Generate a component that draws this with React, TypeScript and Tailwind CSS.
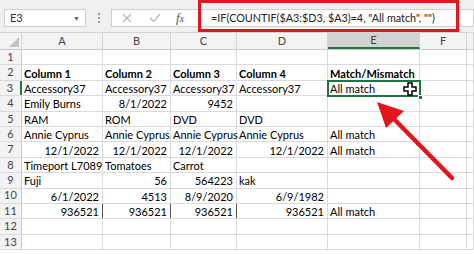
import React from "react";

type Cell = { t?: string; r?: boolean; b?: boolean };

const cols = ["A", "B", "C", "D", "E", "F", ""];
const widths = ["w-[81px]", "w-[68px]", "w-[66px]", "w-[91px]", "w-[92px]", "w-[47px]", "flex-1"];

const rows: Cell[][] = [
  [],
  [{ t: "Column 1", b: true }, { t: "Column 2", b: true }, { t: "Column 3", b: true }, { t: "Column 4", b: true }, { t: "Match/Mismatch", b: true }],
  [{ t: "Accessory37" }, { t: "Accessory37" }, { t: "Accessory37" }, { t: "Accessory37" }, { t: "All match" }],
  [{ t: "Emily Burns" }, { t: "8/1/2022", r: true }, { t: "9452", r: true }, {}, {}],
  [{ t: "RAM" }, { t: "ROM" }, { t: "DVD" }, { t: "DVD" }, {}],
  [{ t: "Annie Cyprus" }, { t: "Annie Cyprus" }, { t: "Annie Cyprus" }, { t: "Annie Cyprus" }, { t: "All match" }],
  [{ t: "12/1/2022", r: true }, { t: "12/1/2022", r: true }, { t: "12/1/2022", r: true }, { t: "12/1/2022", r: true }, { t: "All match" }],
  [{ t: "Timeport L7089" }, { t: "Tomatoes" }, { t: "Carrot" }, {}, {}],
  [{ t: "Fuji" }, { t: "56", r: true }, { t: "564223", r: true }, { t: "kak" }, {}],
  [{ t: "6/1/2022", r: true }, { t: "4513", r: true }, { t: "8/9/2020", r: true }, { t: "6/9/1982", r: true }, {}],
  [{ t: "936521", r: true }, { t: "936521", r: true }, { t: "936521", r: true }, { t: "936521", r: true }, { t: "All match" }],
  [],
  [],
];

export default function App() {
  return (
    <div className="relative w-[474px] h-[254px] overflow-hidden bg-white text-black" style={{ fontFamily: "Lato, 'Open Sans', sans-serif" }}>
      {/* Formula bar strip */}
      <div className="h-[33px] bg-[#f0f0f0] border-b border-[#d4d4d4] flex items-start pt-[9px]">
        <div className="ml-[4px] w-[82px] h-[18px] bg-white border border-[#d0d0d0] flex items-center justify-between px-[5px]">
          <span className="text-[11px] text-[#333]">E3</span>
          <span className="text-[7px] text-[#666]">▼</span>
        </div>
        <div className="w-[25px] h-[18px] flex flex-col items-center justify-center gap-[2px]">
          <span className="w-[2px] h-[2px] bg-[#9a9a9a]" />
          <span className="w-[2px] h-[2px] bg-[#9a9a9a]" />
          <span className="w-[2px] h-[2px] bg-[#9a9a9a]" />
        </div>
        <div className="flex-1 h-[18px] bg-white border border-[#d0d0d0] flex items-center">
          <svg width="12" height="12" viewBox="0 0 12 12" className="ml-[9px]">
            <path d="M2 2 L10 10 M10 2 L2 10" stroke="#b8b8b8" strokeWidth="1.2" />
          </svg>
          <svg width="14" height="12" viewBox="0 0 14 12" className="ml-[15px]">
            <path d="M2 6 L5.5 9.5 L12 2" stroke="#b8b8b8" strokeWidth="1.2" fill="none" />
          </svg>
          <span className="ml-[14px] text-[13px] italic text-[#555]" style={{ fontFamily: "'Liberation Serif', serif" }}>
            f<span className="text-[10px]">x</span>
          </span>
          <span className="ml-[27px] text-[10.8px] text-[#222] whitespace-nowrap">=IF(COUNTIF($A3:$D3, $A3)=4, "All match", "")</span>
        </div>
      </div>

      {/* Column headers */}
      <div className="flex h-[17px] bg-[#f3f3f3] border-b border-[#c8c8c8]">
        <div className="w-[22px] border-r border-[#d4d4d4] relative">
          <svg width="10" height="10" viewBox="0 0 10 10" className="absolute right-[2px] bottom-[2px]">
            <path d="M10 0 L10 10 L0 10 Z" fill="#c4c4c4" />
          </svg>
        </div>
        {cols.map((c, i) => (
          <div
            key={i}
            className={`${widths[i]} flex items-center justify-center text-[11px] text-[#444] border-r border-[#d4d4d4] ${c === "E" ? "bg-[#d2d2d2] border-b-2 border-b-[#217346]" : ""}`}
          >
            {c}
          </div>
        ))}
      </div>

      {/* Grid */}
      {rows.map((row, ri) => (
        <div key={ri} className="flex h-[15.4px] border-b border-[#dadada]">
          <div
            className={`w-[22px] bg-[#f3f3f3] flex items-center justify-center text-[11px] text-[#444] border-r ${ri === 2 ? "bg-[#d2d2d2] border-r-2 border-r-[#217346]" : "border-r-[#c8c8c8]"}`}
          >
            {ri + 1}
          </div>
          {cols.map((_, ci) => {
            const cell = row[ci] || {};
            const dark = ri === 10 && ci < 3;
            return (
              <div
                key={ci}
                className={`${widths[ci]} flex items-center pl-[2px] pr-[3px] pt-[1px] overflow-visible whitespace-nowrap text-[11px] leading-none border-r ${dark ? "border-r-[#555]" : "border-r-[#dadada]"} ${cell.r ? "justify-end" : "justify-start"} ${cell.b ? "font-bold" : ""}`}
              >
                {cell.t}
              </div>
            );
          })}
        </div>
      ))}

      {/* Selected cell E3 */}
      <div className="absolute left-[327px] top-[80px] w-[94px] h-[17px] border-2 border-[#217346]" />
      <div className="absolute left-[418px] top-[95px] w-[5px] h-[5px] bg-[#217346] border border-white" />

      {/* Cursor */}
      <svg width="14" height="14" viewBox="0 0 14 14" className="absolute left-[403px] top-[82px]">
        <path d="M5 1 H9 V5 H13 V9 H9 V13 H5 V9 H1 V5 H5 Z" fill="#fff" stroke="#000" strokeWidth="1.5" />
      </svg>

      {/* Red box around formula */}
      <div className="absolute left-[198px] top-0 w-[261px] h-[32px] border-[3px] border-[#e3161d]" />

      {/* Red arrow */}
      <svg width="474" height="254" className="absolute left-0 top-0 pointer-events-none">
        <line x1="452" y1="178" x2="392" y2="117" stroke="#e3161d" strokeWidth="4.5" strokeLinecap="round" />
        <path d="M377 102 L404 111 L386 128 Z" fill="#e3161d" />
      </svg>
    </div>
  );
}
